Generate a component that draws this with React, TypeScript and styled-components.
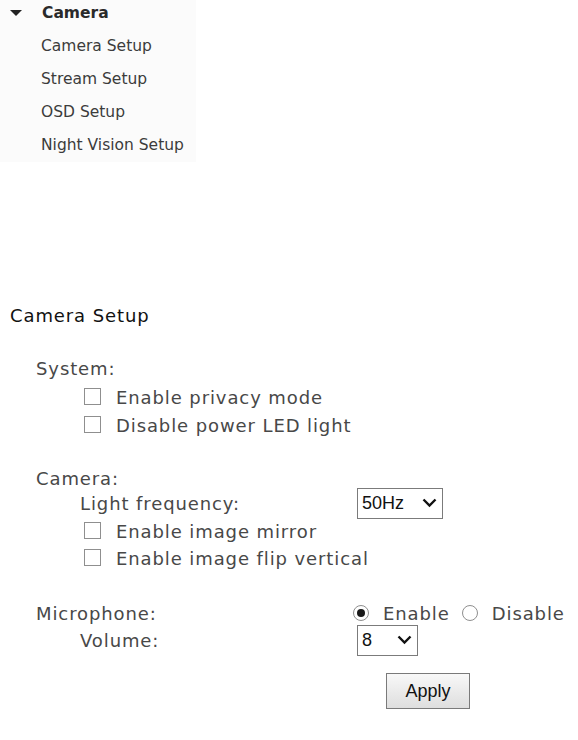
import React from "react";
import styled, { createGlobalStyle } from "styled-components";

const Global = createGlobalStyle`
  html, body { margin: 0; padding: 0; background: #fff; }
  body { font-family: "DejaVu Sans", Verdana, sans-serif; }
`;

const Page = styled.div`
  display: flex;
  flex-direction: column;
  width: 578px;
`;

const Sidebar = styled.nav`
  width: 196px;
  height: 162px;
  background: #fbfbfb;
  padding: 3px 0 0 10px;
  box-sizing: border-box;
  font-family: "DejaVu Sans", Tahoma, sans-serif;
  font-size: 15.5px;
  color: #3c3c3c;
`;

const MenuHead = styled.div`
  display: flex;
  align-items: center;
  height: 20px;
  font-weight: bold;
  color: #2a2a2a;
`;

const Tri = styled.span`
  width: 0;
  height: 0;
  border-left: 6px solid transparent;
  border-right: 6px solid transparent;
  border-top: 6px solid #222;
  margin-right: 20px;
`;

const MenuList = styled.ul`
  list-style: none;
  margin: 7px 0 0 31px;
  padding: 0;
  display: flex;
  flex-direction: column;
`;

const MenuItem = styled.li`
  height: 33px;
  line-height: 33px;
  white-space: nowrap;
`;

const Main = styled.main`
  padding: 143px 0 0 10px;
  color: #484848;
`;

const Title = styled.div`
  font-size: 18px;
  letter-spacing: 0.9px;
  color: #111;
  height: 22px;
  line-height: 22px;
`;

const Group = styled.section<{ $top: number }>`
  margin-top: ${(p) => p.$top}px;
  display: flex;
  flex-direction: column;
`;

const Row = styled.div<{ $indent: number; $h: number }>`
  display: flex;
  align-items: center;
  padding-left: ${(p) => p.$indent}px;
  height: ${(p) => p.$h}px;
  font-size: 18px;
  letter-spacing: 0.9px;
  white-space: nowrap;
`;

const Label = styled.span<{ $w?: number }>`
  display: inline-block;
  flex: none;
  width: ${(p) => (p.$w ? `${p.$w}px` : "auto")};
`;

const Check = styled.span`
  width: 17px;
  height: 17px;
  border: 1px solid #8f8f8f;
  box-sizing: border-box;
  background: #fff;
  margin: -2px 15px 0 0;
  flex: none;
`;

const Radio = styled.span<{ $on?: boolean }>`
  width: 16px;
  height: 16px;
  border-radius: 50%;
  border: 1px solid #8f8f8f;
  box-sizing: border-box;
  background: #fff;
  position: relative;
  margin-right: 14px;
  flex: none;
  &::after {
    content: "";
    display: ${(p) => (p.$on ? "block" : "none")};
    position: absolute;
    left: 3px;
    top: 3px;
    width: 8px;
    height: 8px;
    border-radius: 50%;
    background: #1a1a1a;
  }
`;

const RadioText = styled.span`
  margin-right: 12px;
`;

const Select = styled.span<{ $w: number }>`
  display: inline-flex;
  align-items: center;
  justify-content: space-between;
  flex: none;
  width: ${(p) => p.$w}px;
  height: 31px;
  box-sizing: border-box;
  border: 1px solid #7b7b7b;
  padding: 0 5px 0 4px;
  font-family: "Liberation Sans", Arial, sans-serif;
  font-size: 18px;
  letter-spacing: 0;
  color: #111;
  background: #fff;
`;

const Chevron = () => (
  <svg width="15" height="10" viewBox="0 0 15 10">
    <path d="M1.5 1.5 L7.5 7.5 L13.5 1.5" fill="none" stroke="#111" strokeWidth="2.4" />
  </svg>
);

const ButtonRow = styled.div`
  display: flex;
  padding-left: 376px;
  margin-top: 19px;
`;

const Button = styled.button`
  width: 84px;
  height: 36px;
  font-family: "Liberation Sans", Arial, sans-serif;
  font-size: 18px;
  color: #111;
  border: 1px solid #7a7a7a;
  border-radius: 0;
  background: linear-gradient(#f8f8f8, #dedede);
  padding: 0;
`;

export default function App() {
  return (
    <Page>
      <Global />
      <Sidebar>
        <MenuHead>
          <Tri />
          Camera
        </MenuHead>
        <MenuList>
          <MenuItem>Camera Setup</MenuItem>
          <MenuItem>Stream Setup</MenuItem>
          <MenuItem>OSD Setup</MenuItem>
          <MenuItem>Night Vision Setup</MenuItem>
        </MenuList>
      </Sidebar>
      <Main>
        <Title>Camera Setup</Title>
        <Group $top={26}>
          <Row $indent={26} $h={30}>System:</Row>
          <Row $indent={74} $h={28}>
            <Check />
            Enable privacy mode
          </Row>
          <Row $indent={74} $h={28}>
            <Check />
            Disable power LED light
          </Row>
        </Group>
        <Group $top={28}>
          <Row $indent={26} $h={22}>Camera:</Row>
          <Row $indent={70} $h={28}>
            <Label $w={277}>Light frequency:</Label>
            <Select $w={86}>
              50Hz
              <Chevron />
            </Select>
          </Row>
          <Row $indent={74} $h={28}>
            <Check />
            Enable image mirror
          </Row>
          <Row $indent={74} $h={27}>
            <Check />
            Enable image flip vertical
          </Row>
        </Group>
        <Group $top={28}>
          <Row $indent={26} $h={26}>
            <Label $w={317}>Microphone:</Label>
            <Radio $on />
            <RadioText>Enable</RadioText>
            <Radio />
            <span>Disable</span>
          </Row>
          <Row $indent={70} $h={28}>
            <Label $w={277}>Volume:</Label>
            <Select $w={61}>
              8
              <Chevron />
            </Select>
          </Row>
        </Group>
        <ButtonRow>
          <Button>Apply</Button>
        </ButtonRow>
      </Main>
    </Page>
  );
}
